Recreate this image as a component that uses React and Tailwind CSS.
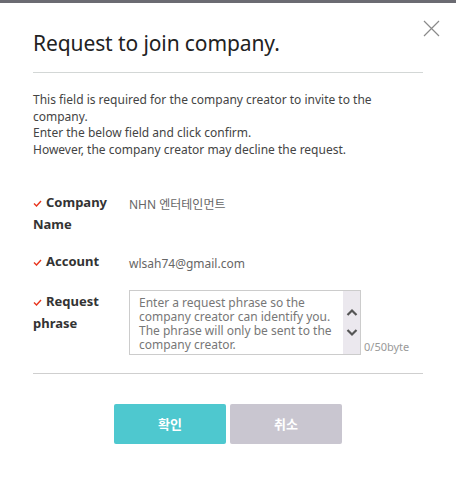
import React from 'react';

const Check = () => (
    <svg width="9" height="7" viewBox="0 0 9 7" className="mr-[4px] shrink-0">
        <path d="M1 3.5 L3.5 6 L8 1" fill="none" stroke="#e8341c" strokeWidth="1.4" />
    </svg>
);

const Field = ({ label, children, top }) => (
    <div className="flex">
        <div className="w-[96px] shrink-0 font-bold text-[13px] leading-[22px] text-[#333]">
            <span className="inline-flex items-center align-middle"><Check /></span>
            {label}
        </div>
        <div className={top}>{children}</div>
    </div>
);

const App = () => {
    return (
        <div className="w-[456px] h-[477px] bg-white border-t-[3px] border-[#6b6b72] relative" style={{ fontFamily: '"Noto Sans", "Noto Sans CJK KR", sans-serif' }}>
            <button className="absolute right-[16px] top-[17px] text-[#888]">
                <svg width="17" height="17" viewBox="0 0 17 17">
                    <path d="M1 1 L16 16 M16 1 L1 16" stroke="#8a8a8a" strokeWidth="1.2" fill="none" />
                </svg>
            </button>
            <div className="px-[33px] pt-[26px]">
                <h1 className="text-[21px] leading-[28px] text-[#222] tracking-[-0.1px]">Request to join company.</h1>
                <div className="h-px bg-[#d3d7d6] mt-[15px]" />
                <p className="mt-[19px] text-[12px] leading-[16.6px] text-[#444]">
                    This field is required for the company creator to invite to the company.<br />
                    Enter the below field and click confirm.<br />
                    However, the company creator may decline the request.
                </p>
                <div className="mt-[33px] flex flex-col gap-[15px]">
                    <Field label="Company Name">
                        <span className="text-[12px] leading-[22px] text-[#666]">NHN 엔터테인먼트</span>
                    </Field>
                    <Field label="Account">
                        <span className="text-[12px] leading-[22px] text-[#666]">wlsah74@gmail.com</span>
                    </Field>
                    <Field label="Request phrase" top="flex items-end">
                        <div className="w-[232px] h-[65px] border border-[#ccc] flex">
                            <div className="flex-1 px-[9px] pt-[5px] text-[12px] leading-[14px] text-[#777]">
                                Enter a request phrase so the company creator can identify you. The phrase will only be sent to the company creator.
                            </div>
                            <div className="w-[17px] bg-[#ebe8ee] flex flex-col items-center justify-center gap-[13px]">
                                <svg width="12" height="8" viewBox="0 0 12 8"><path d="M1.5 7 L6 2.5 L10.5 7" fill="none" stroke="#555" strokeWidth="2.2" /></svg>
                                <svg width="12" height="8" viewBox="0 0 12 8"><path d="M1.5 1 L6 5.5 L10.5 1" fill="none" stroke="#555" strokeWidth="2.2" /></svg>
                            </div>
                        </div>
                        <span className="ml-[3px] text-[11px] leading-[16px] text-[#999]">0/50byte</span>
                    </Field>
                </div>
                <div className="h-px bg-[#cfcfcf] mt-[18px]" />
                <div className="flex justify-center gap-[4px] mt-[30px]">
                    <button className="w-[112px] h-[40px] rounded-[2px] bg-[#4ec8cf] text-white font-bold text-[13px]">확인</button>
                    <button className="w-[112px] h-[40px] rounded-[2px] bg-[#c9c6d0] text-white font-bold text-[13px]">취소</button>
                </div>
            </div>
        </div>
    );
};

export default App;
